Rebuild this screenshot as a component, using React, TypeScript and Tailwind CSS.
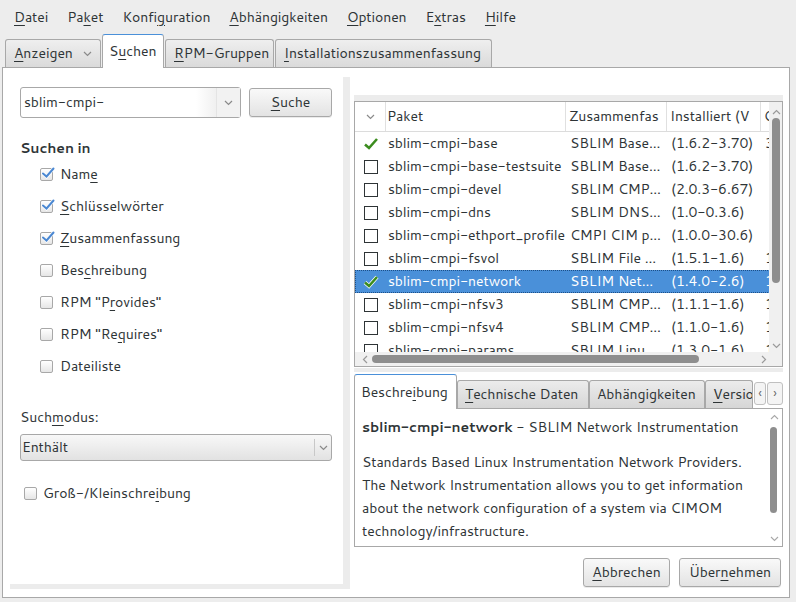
import React from 'react'

const dots = 'bg-[radial-gradient(#cdcdcd_0.55px,transparent_0.8px)] bg-[length:2px_2px]'

function M({ t }: { t: string }) {
  const i = t.indexOf('_')
  if (i < 0) return <>{t}</>
  return (
    <>
      {t.slice(0, i)}
      <span className="underline underline-offset-[3px] decoration-[1px]">{t[i + 1]}</span>
      {t.slice(i + 2)}
    </>
  )
}

function Chevron({ className = '' }: { className?: string }) {
  return (
    <svg width="9" height="6" viewBox="0 0 9 6" className={className}>
      <path d="M1 1 L4.5 4.5 L8 1" fill="none" stroke="#8a8a8a" strokeWidth="1.2" />
    </svg>
  )
}

function CheckBox({ checked }: { checked?: boolean }) {
  return (
    <span className="relative inline-block h-[13px] w-[13px] shrink-0 rounded-[2px] border border-[#a8a8a8] bg-gradient-to-b from-white to-[#e6e6e6]">
      {checked && (
        <svg width="14" height="12" viewBox="0 0 14 12" className="absolute left-[0px] top-[-2px]">
          <path d="M2 6.5 L5.5 9.5 L12.5 1.5" fill="none" stroke="#ffffff" strokeWidth="3.4" strokeLinecap="round" />
          <path d="M2 6.5 L5.5 9.5 L12.5 1.5" fill="none" stroke="#4b88d2" strokeWidth="2" strokeLinecap="round" />
        </svg>
      )}
    </span>
  )
}

function GreenCheck({ light }: { light?: boolean }) {
  return (
    <svg width="16" height="14" viewBox="0 0 16 14">
      {light && <path d="M2 7.5 L6 11 L14 2" fill="none" stroke="#ffffff" strokeWidth="4" />}
      <path d="M2 7.5 L6 11 L14 2" fill="none" stroke="#3b8c1e" strokeWidth="2.6" />
    </svg>
  )
}

function Button({ label, w }: { label: string; w: string }) {
  return (
    <div className={`flex h-[29px] ${w} items-center justify-center rounded-[3px] border border-[#a8a8a8] bg-gradient-to-b from-[#f9f9f9] to-[#e3e3e3] shadow-[0_1px_0_rgba(0,0,0,0.08)]`}>
      <M t={label} />
    </div>
  )
}

const searchIn: [string, boolean][] = [
  ['Nam_e', true],
  ['_Schlüsselwörter', true],
  ['_Zusammenfassung', true],
  ['Bes_chreibung', false],
  ['RPM "P_rovides"', false],
  ['RPM "Re_quires"', false],
  ['Dateiliste', false],
]

const rows: [boolean, string, string, string, string][] = [
  [true, 'sblim-cmpi-base', 'SBLIM Base...', '(1.6.2-3.70)', '3'],
  [false, 'sblim-cmpi-base-testsuite', 'SBLIM Base...', '(1.6.2-3.70)', ''],
  [false, 'sblim-cmpi-devel', 'SBLIM CMP...', '(2.0.3-6.67)', ''],
  [false, 'sblim-cmpi-dns', 'SBLIM DNS...', '(1.0-0.3.6)', ''],
  [false, 'sblim-cmpi-ethport_profile', 'CMPI CIM p...', '(1.0.0-30.6)', ''],
  [false, 'sblim-cmpi-fsvol', 'SBLIM File ...', '(1.5.1-1.6)', '1'],
  [true, 'sblim-cmpi-network', 'SBLIM Net...', '(1.4.0-2.6)', '1'],
  [false, 'sblim-cmpi-nfsv3', 'SBLIM CMP...', '(1.1.1-1.6)', '1'],
  [false, 'sblim-cmpi-nfsv4', 'SBLIM CMP...', '(1.1.0-1.6)', '1'],
  [false, 'sblim-cmpi-params', 'SBLIM Linu...', '(1.3.0-1.6)', '1'],
]

function LeftPane() {
  return (
    <div className="flex w-[340px] shrink-0 flex-col">
      <div className="flex-1 pl-[17px] pt-[19px]">
        <div className="flex items-start gap-[8px]">
          <div className="flex h-[31px] w-[221px] items-center rounded-[3px] border border-[#a8a8a8] bg-white">
            <div className="flex-1 pl-[3px]">sblim-cmpi-</div>
            <div className="h-full w-[20px] bg-gradient-to-r from-transparent to-[#f0f0f0]" />
            <div className="flex h-full w-[24px] items-center justify-center border-l border-[#e4e4e4] bg-[#f2f2f2]">
              <Chevron />
            </div>
          </div>
          <div className="mt-[1px]">
            <Button label="_Suche" w="w-[83px]" />
          </div>
        </div>
        <div className="mt-[20px] h-[20px] font-bold leading-[20px]">Suchen in</div>
        <div className="pl-[20px]">
          {searchIn.map(([l, c]) => (
            <div key={l} className="flex h-[32px] items-center gap-[7px]">
              <CheckBox checked={c} />
              <span>
                <M t={l} />
              </span>
            </div>
          ))}
        </div>
        <div className="mt-[25px] h-[20px] leading-[20px]">
          <M t="Such_modus:" />
        </div>
        <div className="mt-[7px] flex h-[27px] w-[312px] items-center rounded-[3px] border border-[#a8a8a8] bg-gradient-to-b from-[#f8f8f8] to-[#e2e2e2]">
          <div className="flex-1 pl-[1px]">Enthält</div>
          <div className="h-[17px] w-px bg-[#c8c8c8]" />
          <div className="flex w-[16px] justify-center">
            <Chevron />
          </div>
        </div>
        <div className="mt-[16px] flex h-[32px] items-center gap-[6px] pl-[4px]">
          <CheckBox />
          <span>
            <M t="Groß-/Kleinschre_ibung" />
          </span>
        </div>
      </div>
      <div className={`mb-[8px] ml-[7px] h-[5px] ${dots}`} />
    </div>
  )
}

function PackageTree() {
  return (
    <div className="relative h-[266px] overflow-hidden border border-[#a8a8a8] bg-white">
      <div className="flex h-[30px] border-b border-[#dcdcdc] text-[#2e3436]">
        <div className="flex w-[31px] shrink-0 items-center justify-center border-r border-[#e0e0e0]">
          <Chevron />
        </div>
        <div className="flex w-[180px] shrink-0 items-center overflow-hidden whitespace-nowrap border-r border-[#e0e0e0] pl-[1px]">Paket</div>
        <div className="flex w-[101px] shrink-0 items-center overflow-hidden whitespace-nowrap border-r border-[#e0e0e0] pl-[3px]">Zusammenfas</div>
        <div className="flex w-[94px] shrink-0 items-center overflow-hidden whitespace-nowrap border-r border-[#e0e0e0] pl-[3px]">Installiert (V</div>
        <div className="flex w-[14px] shrink-0 items-center overflow-hidden whitespace-nowrap pl-[3px]">G</div>
      </div>
      {rows.map(([inst, name, sum, ver, extra], i) => {
        const sel = i === 6
        return (
          <div
            key={name}
            className={`flex h-[23px] items-center whitespace-nowrap ${sel ? 'border border-dotted border-[#1d4f87] bg-[#4a90d9] text-white' : 'border border-transparent'}`}
          >
            <div className="flex w-[30px] shrink-0 justify-center">
              {inst ? <GreenCheck light={sel} /> : <span className="h-[14px] w-[14px] border border-[#2e3436] bg-white" />}
            </div>
            <div className="w-[181px] shrink-0 overflow-hidden pl-[2px]">{name}</div>
            <div className="w-[101px] shrink-0 overflow-hidden pl-[3px]">{sum}</div>
            <div className="w-[94px] shrink-0 overflow-hidden pl-[3px]">{ver}</div>
            <div className="w-[12px] shrink-0 overflow-hidden pl-[3px]">{extra}</div>
          </div>
        )
      })}
      {/* vertical scrollbar */}
      <div className="absolute right-0 top-0 h-[251px] w-[13px] bg-[#f0f0f0]">
        <svg width="9" height="6" viewBox="0 0 9 6" className="absolute left-[3px] top-[7px]">
          <path d="M1 5 L4.5 1.5 L8 5" fill="none" stroke="#9a9a9a" strokeWidth="1.2" />
        </svg>
        <div className="absolute left-[3px] top-[16px] h-[165px] w-[8px] rounded-full bg-[#8e8e8e]" />
        <svg width="9" height="6" viewBox="0 0 9 6" className="absolute bottom-[4px] left-[3px]">
          <path d="M1 1 L4.5 4.5 L8 1" fill="none" stroke="#9a9a9a" strokeWidth="1.2" />
        </svg>
      </div>
      {/* horizontal scrollbar */}
      <div className="absolute bottom-0 left-0 right-0 h-[14px] bg-[#f0f0f0]">
        <svg width="6" height="9" viewBox="0 0 6 9" className="absolute left-[7px] top-[3px]">
          <path d="M5 1 L1.5 4.5 L5 8" fill="none" stroke="#9a9a9a" strokeWidth="1.2" />
        </svg>
        <div className="absolute left-[17px] top-[3px] h-[8px] w-[327px] rounded-full bg-[#8e8e8e]" />
        <svg width="6" height="9" viewBox="0 0 6 9" className="absolute left-[406px] top-[3px]">
          <path d="M1 1 L4.5 4.5 L1 8" fill="none" stroke="#9a9a9a" strokeWidth="1.2" />
        </svg>
      </div>
    </div>
  )
}

function SmallTab({ label, active, w }: { label: string; active?: boolean; w: string }) {
  if (active)
    return (
      <div className={`relative z-10 -mb-px flex h-[35px] ${w} items-center rounded-t-[3px] border border-b-0 border-[#a8a8a8] border-t-[#4a90d9] bg-white pl-[6px]`}>
        <M t={label} />
      </div>
    )
  return (
    <div className={`flex h-[28px] ${w} items-center overflow-hidden whitespace-nowrap rounded-t-[3px] border border-b-0 border-[#a8a8a8] bg-gradient-to-b from-[#ececec] to-[#d6d6d6] pl-[7px]`}>
      <M t={label} />
    </div>
  )
}

function Details() {
  return (
    <>
      <div className="flex h-[36px] items-end">
        <SmallTab label="Beschre_ibung" active w="w-[103px]" />
        <SmallTab label="_Technische Daten" w="w-[132px]" />
        <SmallTab label="Abhängigkeiten" w="w-[116px]" />
        <SmallTab label="_Versio" w="w-[48px]" />
        <div className="mb-[3px] ml-[1px] flex h-[23px] w-[12px] items-center justify-center rounded-[3px] border border-[#c0c0c0] bg-[#f4f4f4] text-[13px] text-[#666]">‹</div>
        <div className="mb-[3px] ml-[1px] flex h-[23px] w-[16px] items-center justify-center rounded-[3px] border border-[#c0c0c0] bg-[#f4f4f4] text-[13px] text-[#666]">›</div>
      </div>
      <div className="relative h-[139px] border border-[#a8a8a8] bg-white pl-[7px] pt-[7px]">
        <div className="h-[23px] whitespace-nowrap leading-[23px]">
          <span className="font-bold">sblim-cmpi-network</span> - SBLIM Network Instrumentation
        </div>
        <div className="mt-[12px] whitespace-nowrap leading-[23px]">
          Standards Based Linux Instrumentation Network Providers.
          <br />
          The Network Instrumentation allows you to get information
          <br />
          about the network configuration of a system via CIMOM
          <br />
          technology/infrastructure.
        </div>
        <div className="absolute right-[2px] top-[1px] h-[135px] w-[11px]">
          <svg width="9" height="6" viewBox="0 0 9 6" className="absolute left-[1px] top-[4px]">
            <path d="M1 5 L4.5 1.5 L8 5" fill="none" stroke="#a8a8a8" strokeWidth="1.1" />
          </svg>
          <div className="absolute left-[1px] top-[17px] h-[86px] w-[7px] rounded-full bg-[#8e8e8e]" />
          <svg width="9" height="6" viewBox="0 0 9 6" className="absolute bottom-[3px] left-[1px]">
            <path d="M1 1 L4.5 4.5 L8 1" fill="none" stroke="#a8a8a8" strokeWidth="1.1" />
          </svg>
        </div>
      </div>
      <div className="mr-[2px] mt-[11px] flex justify-end gap-[9px]">
        <Button label="_Abbrechen" w="w-[87px]" />
        <Button label="Über_nehmen" w="w-[102px]" />
      </div>
    </>
  )
}

function TopTab({ label, active, arrow, w }: { label: string; active?: boolean; arrow?: boolean; w: string }) {
  if (active)
    return (
      <div className={`relative z-10 -mb-px flex h-[34px] ${w} items-center rounded-t-[3px] border border-b-0 border-[#a8a8a8] border-t-[#4a90d9] bg-white pl-[6px]`}>
        <M t={label} />
      </div>
    )
  return (
    <div className={`flex h-[28px] ${w} items-center justify-between overflow-hidden whitespace-nowrap rounded-t-[3px] border border-b-0 border-[#a8a8a8] bg-gradient-to-b from-[#efefef] to-[#dadada] pl-[8px] pr-[8px]`}>
      <span>
        <M t={label} />
      </span>
      {arrow && <Chevron />}
    </div>
  )
}

export default function App() {
  return (
    <div className="h-[602px] w-[796px] overflow-hidden bg-[#ededed] font-['Cantarell','Open_Sans','DejaVu_Sans',sans-serif] text-[14px] tracking-[-0.1px] text-[#2e3436]">
      <div className="flex h-[34px] items-center gap-[19px] pl-[14px]">
        {['_Datei', 'Pa_ket', 'Konfi_guration', '_Abhängigkeiten', '_Optionen', 'E_xtras', '_Hilfe'].map((m) => (
          <span key={m}>
            <M t={m} />
          </span>
        ))}
      </div>
      <div className="flex h-[33px] items-end gap-[1px] pl-[5px]">
        <TopTab label="_Anzeigen" arrow w="w-[96px]" />
        <TopTab label="S_uchen" active w="w-[62px]" />
        <TopTab label="_RPM-Gruppen" w="w-[109px]" />
        <TopTab label="_Installationszusammenfassung" w="w-[217px]" />
      </div>
      <div className="ml-[2px] flex h-[531px] w-[788px] border border-[#a8a8a8] bg-white">
        <LeftPane />
        <div className={`mb-[8px] mt-[9px] w-[7px] shrink-0 ${dots}`} />
        <div className="flex flex-1 flex-col pl-[4px] pr-[6px] pt-[27px]">
          <div className={`h-[6px] ${dots}`} />
          <PackageTree />
          <div className={`mt-[1px] h-[4px] ${dots}`} />
          <Details />
        </div>
      </div>
    </div>
  )
}
